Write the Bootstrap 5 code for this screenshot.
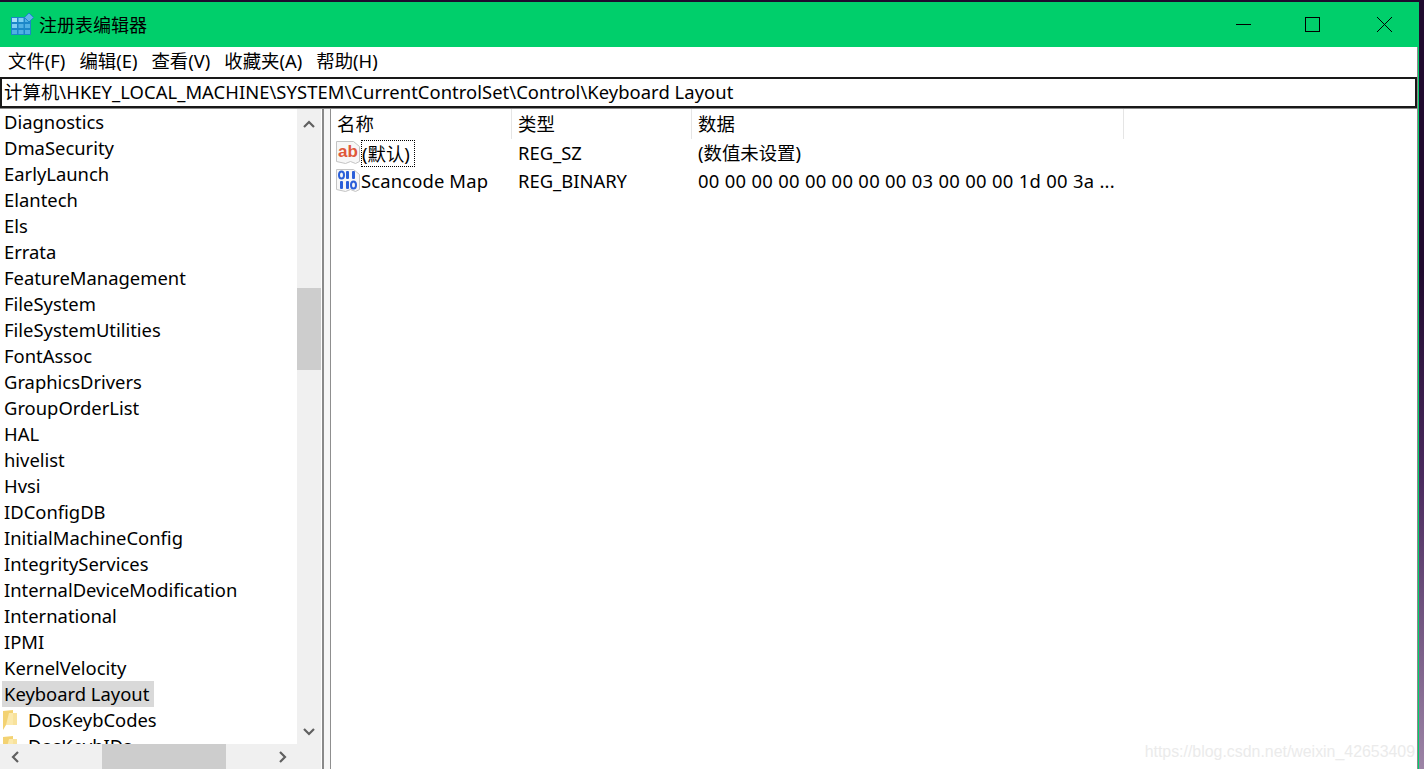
<!DOCTYPE html>
<html lang="zh">
<head>
<meta charset="utf-8">
<title>注册表编辑器</title>
<link href="https://cdn.jsdelivr.net/npm/bootstrap@5.3.0/dist/css/bootstrap.min.css" rel="stylesheet">
<style>
html,body{height:769px;overflow:hidden;}
body{background:linear-gradient(180deg,#1f0a2e 0,#1f0a2e 35%,#4a2a5e 62%,#9c84a6 100%);font-family:"Noto Sans","Noto Sans CJK SC",sans-serif;font-size:18.4px;color:#000;padding:2px 5px 0 0;line-height:26px;}
.reg-win{width:1419px;height:767px;background:#fff;border-right:1px solid #00cf6b;}
.reg-title{height:45px;background:#00cf6b;padding-left:11px;gap:4px;flex:none;}
.reg-title-text{font-size:18px;}
.reg-caps{margin-left:auto;}
.reg-cap{height:45px;}
.reg-cap-min{width:63px;}
.reg-cap-max{width:75px;}
.reg-cap-close{width:68px;}
.reg-body{border-right:1px solid #8a8a8a;min-height:0;flex:1;}
.reg-menu{height:30px;padding-left:8px;gap:14px;line-height:27px;flex:none;}
.reg-addr{height:31px;border:2px solid #191919;line-height:25px;padding-left:2px;letter-spacing:.05px;white-space:nowrap;flex:none;}
.reg-main{height:661px;border-top:1px solid #8a8a8a;flex:none;}
.reg-left{width:321px;flex:none;}
.reg-tree{width:297px;height:635px;overflow:hidden;flex:none;}
.reg-row{height:26px;padding-left:4px;white-space:nowrap;}
.reg-sel{background:#d9d9d9;width:152px;margin-left:2px;padding-left:2px;}
.reg-folder{gap:11px;padding-left:3px;}
.reg-vbar{width:24px;height:635px;background:#f0f0f0;}
.reg-arrow{height:25px;flex:none;}
.reg-arrow-up{padding-top:4px;}
.reg-vthumb{height:82px;background:#cdcdcd;margin-top:154px;}
.reg-hbar{height:25px;background:#f0f0f0;}
.reg-harrow-l{width:24px;padding-left:5px;}
.reg-harrow-r{width:78px;padding-left:30px;padding-right:28px;}
.reg-hthumb{width:124px;height:25px;background:#cdcdcd;margin-left:78px;}
.reg-split{width:9px;margin-left:1px;flex:none;border-left:2px solid #8a8a8a;background:#f7f7f7;border-right:1px solid #8f8f8f;}
.reg-right{flex:1;min-width:0;}
.reg-head{height:30px;flex:none;}
.reg-col1{width:181px;flex:none;padding-left:6px;}
.reg-col2{width:180px;flex:none;padding-left:6px;}
.reg-col3{width:432px;flex:none;padding-left:6px;white-space:nowrap;}
.reg-hex{letter-spacing:.3px;}
.reg-scan{letter-spacing:.15px;}
.reg-hcell{border-right:1px solid #e5e5e5;height:30px;line-height:30px;}
.reg-data{height:28px;line-height:28px;}
.reg-name{gap:1px;padding-left:5px;}
.reg-focus{outline:1px dotted #000;outline-offset:-1px;padding:0 5px 0 1px;height:27px;}
.reg-mark{color:#ebebeb;font-family:"Liberation Sans",sans-serif;font-size:15.900px;line-height:20px;margin:-28px 0 0 0;text-align:right;padding-right:2px;}
.reg-list{height:631px;overflow:hidden;}
</style>
</head>
<body>
<div class="reg-win d-flex flex-column">
  <div class="reg-title d-flex align-items-center">
    <svg width="24" height="25" viewBox="0 0 24 25"><rect y="5" width="20" height="18" fill="#1b87c9"/><g fill="#7fcdf3"><rect x="1" y="6" width="5" height="4" fill="#a5e0f8"/><rect x="7.500" y="6" width="5" height="4"/><rect x="14" y="6" width="5" height="4" fill="#4fb0e4"/><rect x="1" y="12" width="5" height="4"/><rect x="7.500" y="12" width="5" height="4" fill="#4fb0e4"/><rect x="14" y="12" width="5" height="4" fill="#4fb0e4"/><rect x="1" y="18" width="5" height="4" fill="#4fb0e4"/><rect x="7.500" y="18" width="5" height="4" fill="#4fb0e4"/><rect x="14" y="18" width="5" height="4" fill="#4fb0e4"/></g><path d="M18 1l4.500 4.500-4.500 4.500-4.500-4.500z" fill="#5fb6e6" stroke="#1b87c9"/></svg>
    <span class="reg-title-text">注册表编辑器</span>
    <div class="reg-caps d-flex">
      <div class="reg-cap reg-cap-min d-flex align-items-center justify-content-center"><svg width="15" height="15" viewBox="0 0 15 15"><path d="M0 7.500h15" stroke="#000" fill="none"/></svg></div>
      <div class="reg-cap reg-cap-max d-flex align-items-center justify-content-center"><svg width="15" height="15" viewBox="0 0 15 15"><rect x=".5" y=".5" width="14" height="14" stroke="#000" fill="none"/></svg></div>
      <div class="reg-cap reg-cap-close d-flex align-items-center justify-content-center"><svg width="15" height="15" viewBox="0 0 15 15"><path d="M0 0l15 15M15 0L0 15" stroke="#000" fill="none"/></svg></div>
    </div>
  </div>
  <div class="reg-body d-flex flex-column">
  <div class="reg-menu d-flex"><span>文件(F)</span><span>编辑(E)</span><span>查看(V)</span><span>收藏夹(A)</span><span>帮助(H)</span></div>
  <div class="reg-addr">计算机\HKEY_LOCAL_MACHINE\SYSTEM\CurrentControlSet\Control\Keyboard Layout</div>
  <div class="reg-main d-flex">
    <div class="reg-left d-flex flex-column">
      <div class="d-flex">
        <div class="reg-tree">
          <div class="reg-row">Diagnostics</div><div class="reg-row">DmaSecurity</div><div class="reg-row">EarlyLaunch</div><div class="reg-row">Elantech</div><div class="reg-row">Els</div><div class="reg-row">Errata</div><div class="reg-row">FeatureManagement</div><div class="reg-row">FileSystem</div><div class="reg-row">FileSystemUtilities</div><div class="reg-row">FontAssoc</div><div class="reg-row">GraphicsDrivers</div><div class="reg-row">GroupOrderList</div><div class="reg-row">HAL</div><div class="reg-row">hivelist</div><div class="reg-row">Hvsi</div><div class="reg-row">IDConfigDB</div><div class="reg-row">InitialMachineConfig</div><div class="reg-row">IntegrityServices</div><div class="reg-row">InternalDeviceModification</div><div class="reg-row">International</div><div class="reg-row">IPMI</div><div class="reg-row">KernelVelocity</div>
          <div class="reg-row reg-sel">Keyboard Layout</div>
          <div class="reg-row reg-folder d-flex align-items-center"><svg width="14" height="20" viewBox="0 0 14 20"><path d="M0 1l10-1v15H3l-3 5z" fill="#f3d272"/><path d="M10 3h4v12h-4z" fill="#f8e29c"/><path d="M3 15l3-12h4v12z" fill="#fbe9ad"/></svg><span>DosKeybCodes</span></div>
          <div class="reg-row reg-folder d-flex align-items-center"><svg width="14" height="20" viewBox="0 0 14 20"><path d="M0 1l10-1v15H3l-3 5z" fill="#f3d272"/><path d="M10 3h4v12h-4z" fill="#f8e29c"/><path d="M3 15l3-12h4v12z" fill="#fbe9ad"/></svg><span>DosKeybIDs</span></div>
        </div>
        <div class="reg-vbar d-flex flex-column">
          <div class="reg-arrow reg-arrow-up d-flex align-items-center justify-content-center"><svg width="12" height="8" viewBox="0 0 12 8"><path d="M1 7l5-5 5 5" stroke="#606060" stroke-width="2.200" fill="none"/></svg></div>
          <div class="reg-vthumb"></div>
          <div class="reg-arrow mt-auto d-flex align-items-center justify-content-center"><svg width="12" height="8" viewBox="0 0 12 8"><path d="M1 1l5 5 5-5" stroke="#606060" stroke-width="2.200" fill="none"/></svg></div>
        </div>
      </div>
      <div class="reg-hbar d-flex">
        <div class="reg-arrow reg-harrow-l d-flex align-items-center justify-content-center"><svg width="8" height="12" viewBox="0 0 8 12"><path d="M7 1L2 6l5 5" stroke="#606060" stroke-width="2.200" fill="none"/></svg></div>
        <div class="reg-hthumb"></div>
        <div class="reg-arrow reg-harrow-r ms-auto d-flex align-items-center justify-content-center"><svg width="8" height="12" viewBox="0 0 8 12"><path d="M1 1l5 5-5 5" stroke="#606060" stroke-width="2.200" fill="none"/></svg></div>
      </div>
    </div>
    <div class="reg-split"></div>
    <div class="reg-right d-flex flex-column">
      <div class="reg-head d-flex">
        <div class="reg-col1 reg-hcell">名称</div><div class="reg-col2 reg-hcell">类型</div><div class="reg-col3 reg-hcell">数据</div>
      </div>
      <div class="reg-list">
        <div class="reg-data d-flex">
          <div class="reg-col1 reg-name d-flex align-items-center">
            <svg width="24" height="24" viewBox="0 0 24 24"><path d="M.5.500h17l6 5v15l-4 2-5-2-5 2-9-2z" fill="#f7f7f7" stroke="#c4c4c4"/><text x="2" y="16" font-family="Liberation Sans" font-weight="700" font-size="17" fill="#e0583a">ab</text></svg>
            <span class="reg-focus">(默认)</span>
          </div>
          <div class="reg-col2">REG_SZ</div>
          <div class="reg-col3">(数值未设置)</div>
        </div>
        <div class="reg-data d-flex">
          <div class="reg-col1 reg-name d-flex align-items-center">
            <svg width="24" height="24" viewBox="0 0 24 24"><path d="M.5.500h17l6 5v15l-4 2-5-2-5 2-9-2z" fill="#f7f7f7" stroke="#c4c4c4"/><g fill="#2b5fd9"><rect x="10" y="2" width="3" height="8" rx="1"/><rect x="16" y="2" width="3" height="8" rx="1"/><rect x="4" y="12" width="3" height="8" rx="1"/><rect x="10" y="12" width="3" height="8" rx="1"/></g><g fill="none" stroke="#2b5fd9" stroke-width="2"><ellipse cx="5.500" cy="6" rx="2.500" ry="3.500"/><ellipse cx="17.500" cy="16" rx="2.500" ry="3.500"/></g></svg>
            <span class="reg-scan ms-px">Scancode Map</span>
          </div>
          <div class="reg-col2">REG_BINARY</div>
          <div class="reg-col3 reg-hex">00 00 00 00 00 00 00 00 03 00 00 00 1d 00 3a ...</div>
        </div>
      </div>
      <div class="reg-mark">https://blog.csdn.net/weixin_42653409</div>
    </div>
  </div>
  </div>
</div>
<script src="https://cdn.jsdelivr.net/npm/bootstrap@5.3.0/dist/js/bootstrap.bundle.min.js"></script>
</body>
</html>
